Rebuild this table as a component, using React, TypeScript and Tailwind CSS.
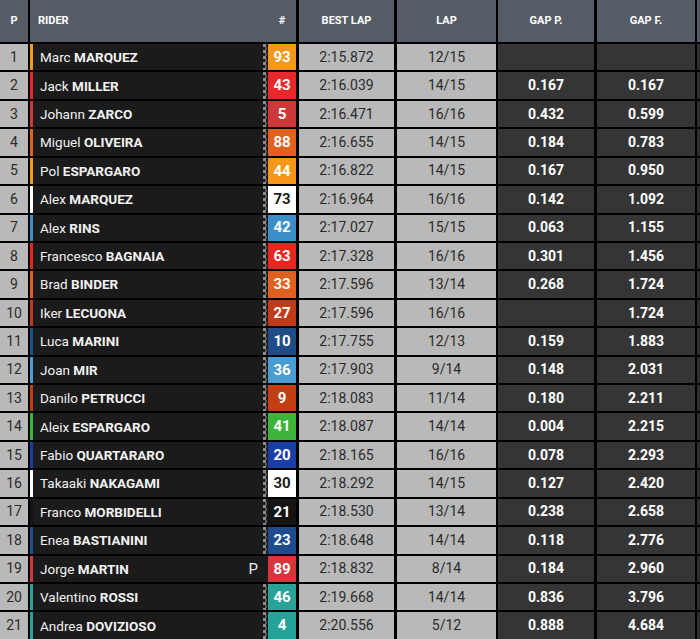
import React from "react";

type Rider = {
  pos: number;
  first: string;
  last: string;
  num: string;
  color: string;
  dark?: boolean;
  best: string;
  lap: string;
  gapP: string;
  gapF: string;
  pit?: boolean;
};

const riders: Rider[] = [
  { pos: 1, first: "Marc", last: "MARQUEZ", num: "93", color: "bg-[#f6971c]", best: "2:15.872", lap: "12/15", gapP: "", gapF: "" },
  { pos: 2, first: "Jack", last: "MILLER", num: "43", color: "bg-[#e8282b]", best: "2:16.039", lap: "14/15", gapP: "0.167", gapF: "0.167" },
  { pos: 3, first: "Johann", last: "ZARCO", num: "5", color: "bg-[#cf383b]", best: "2:16.471", lap: "16/16", gapP: "0.432", gapF: "0.599" },
  { pos: 4, first: "Miguel", last: "OLIVEIRA", num: "88", color: "bg-[#e2611f]", best: "2:16.655", lap: "14/15", gapP: "0.184", gapF: "0.783" },
  { pos: 5, first: "Pol", last: "ESPARGARO", num: "44", color: "bg-[#f6971c]", best: "2:16.822", lap: "14/15", gapP: "0.167", gapF: "0.950" },
  { pos: 6, first: "Alex", last: "MARQUEZ", num: "73", color: "bg-white", dark: true, best: "2:16.964", lap: "16/16", gapP: "0.142", gapF: "1.092" },
  { pos: 7, first: "Alex", last: "RINS", num: "42", color: "bg-[#3b8fc8]", best: "2:17.027", lap: "15/15", gapP: "0.063", gapF: "1.155" },
  { pos: 8, first: "Francesco", last: "BAGNAIA", num: "63", color: "bg-[#e5271f]", best: "2:17.328", lap: "16/16", gapP: "0.301", gapF: "1.456" },
  { pos: 9, first: "Brad", last: "BINDER", num: "33", color: "bg-[#e0601f]", best: "2:17.596", lap: "13/14", gapP: "0.268", gapF: "1.724" },
  { pos: 10, first: "Iker", last: "LECUONA", num: "27", color: "bg-[#c23b19]", best: "2:17.596", lap: "16/16", gapP: "", gapF: "1.724" },
  { pos: 11, first: "Luca", last: "MARINI", num: "10", color: "bg-[#1e4d8a]", best: "2:17.755", lap: "12/13", gapP: "0.159", gapF: "1.883" },
  { pos: 12, first: "Joan", last: "MIR", num: "36", color: "bg-[#4a9dd2]", best: "2:17.903", lap: "9/14", gapP: "0.148", gapF: "2.031" },
  { pos: 13, first: "Danilo", last: "PETRUCCI", num: "9", color: "bg-[#c33e12]", best: "2:18.083", lap: "11/14", gapP: "0.180", gapF: "2.211" },
  { pos: 14, first: "Aleix", last: "ESPARGARO", num: "41", color: "bg-[#3cb43a]", best: "2:18.087", lap: "14/14", gapP: "0.004", gapF: "2.215" },
  { pos: 15, first: "Fabio", last: "QUARTARARO", num: "20", color: "bg-[#1b3ea6]", best: "2:18.165", lap: "16/16", gapP: "0.078", gapF: "2.293" },
  { pos: 16, first: "Takaaki", last: "NAKAGAMI", num: "30", color: "bg-white", dark: true, best: "2:18.292", lap: "14/15", gapP: "0.127", gapF: "2.420" },
  { pos: 17, first: "Franco", last: "MORBIDELLI", num: "21", color: "bg-[#141414]", best: "2:18.530", lap: "13/14", gapP: "0.238", gapF: "2.658" },
  { pos: 18, first: "Enea", last: "BASTIANINI", num: "23", color: "bg-[#1e4c8c]", best: "2:18.648", lap: "14/14", gapP: "0.118", gapF: "2.776" },
  { pos: 19, first: "Jorge", last: "MARTIN", num: "89", color: "bg-[#d6363b]", best: "2:18.832", lap: "8/14", gapP: "0.184", gapF: "2.960", pit: true },
  { pos: 20, first: "Valentino", last: "ROSSI", num: "46", color: "bg-[#29a297]", best: "2:19.668", lap: "14/14", gapP: "0.836", gapF: "3.796" },
  { pos: 21, first: "Andrea", last: "DOVIZIOSO", num: "4", color: "bg-[#26a399]", best: "2:20.556", lap: "5/12", gapP: "0.888", gapF: "4.684" },
];

const Checker = () => (
  <svg width="6" height="27" className="block">
    <defs>
      <pattern id="chk" width="6" height="6" patternUnits="userSpaceOnUse">
        <rect width="6" height="6" fill="#1b1b1b" />
        <rect x="1" y="0" width="3" height="3" fill="#8c8c8c" />
        <rect x="3" y="3" width="2" height="3" fill="#5a5a5a" />
      </pattern>
    </defs>
    <rect width="6" height="27" fill="url(#chk)" />
  </svg>
);

const Row = ({ r }: { r: Rider }) => (
  <div className="flex h-[28.43px] border-t-2 border-black bg-black text-[14px]">
    <div className="flex w-[28px] items-center justify-center bg-[#b9b9b9] text-[#2b2b2b]">
      {r.pos}
    </div>
    <div className={`ml-[2px] w-[3px] ${r.color}`} />
    <div className="flex w-[229px] items-center justify-between bg-[#1b1b1b] pl-[7px] pr-[4px] text-[13.5px] text-[#f2f2f2]">
      <span>
        {r.first} <span className="font-bold">{r.last}</span>
      </span>
      {r.pit && <span className="text-[15px] text-[#e8e8e8]">P</span>}
    </div>
    <div className="w-[6px] overflow-hidden bg-[#1b1b1b]">{!r.pit && <Checker />}</div>
    <div
      className={`flex w-[28px] items-center justify-center text-[15px] font-bold ${r.color} ${
        r.dark ? "text-[#1b1b1b]" : "text-white"
      }`}
    >
      {r.num}
    </div>
    <div className="ml-[3px] flex w-[95px] items-center justify-center bg-[#b9b9b9] text-[#2b2b2b]">
      {r.best}
    </div>
    <div className="ml-[3px] flex w-[99px] items-center justify-center bg-[#b9b9b9] text-[#2b2b2b]">
      {r.lap}
    </div>
    <div className="ml-[2px] flex w-[96px] items-center justify-center bg-[#353535] font-bold text-white">
      {r.gapP}
    </div>
    <div className="ml-[3px] flex w-[98px] items-center justify-center bg-[#353535] font-bold text-white">
      {r.gapF}
    </div>
    <div className="ml-[2px] flex-1 bg-[#2e2e2e]" />
  </div>
);

export default function App() {
  return (
    <div className="h-[639px] w-[700px] overflow-hidden bg-black font-['Roboto',sans-serif]">
      <div className="flex h-[42px] bg-black text-[11px] font-bold text-white">
        <div className="flex w-[28px] items-center justify-center bg-[#565c65]">P</div>
        <div className="ml-[2px] flex w-[238px] items-center bg-[#565c65] pl-[8px]">RIDER</div>
        <div className="flex w-[28px] items-center justify-center bg-[#565c65]">#</div>
        <div className="ml-[3px] flex w-[95px] items-center justify-center bg-[#565c65]">BEST LAP</div>
        <div className="ml-[3px] flex w-[99px] items-center justify-center bg-[#565c65]">LAP</div>
        <div className="ml-[2px] flex w-[96px] items-center justify-center bg-[#565c65]">GAP P.</div>
        <div className="ml-[3px] flex w-[98px] items-center justify-center bg-[#565c65]">GAP F.</div>
        <div className="ml-[2px] flex-1 bg-[#565c65]" />
      </div>
      {riders.map((r) => (
        <Row key={r.pos} r={r} />
      ))}
    </div>
  );
}
